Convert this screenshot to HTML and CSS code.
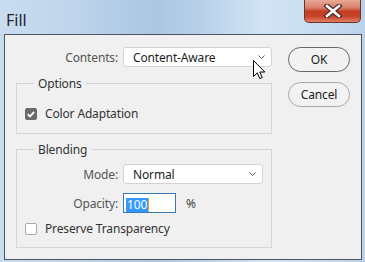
FILE: index.html
```html
<!DOCTYPE html>
<html>
<head>
    <title>Fill</title>
    <link rel="stylesheet" href="styles.css">
</head>
<body>
    <div class="window">
        <div class="titlebar">
            <span class="title">Fill</span>
            <div class="close">
                <svg width="22" height="14" viewBox="0 0 22 14">
                    <path d="M5 2 L17 12 M17 2 L5 12" stroke="#4a2a24" stroke-width="5" stroke-linecap="square"/>
                    <path d="M5 2 L17 12 M17 2 L5 12" stroke="#ffffff" stroke-width="2.6" stroke-linecap="square"/>
                </svg>
            </div>
        </div>

        <div class="client">
            <div class="main">
                <div class="row top-row">
                    <span class="label wide-label">Contents:</span>
                    <div class="select contents-select">
                        <span>Content-Aware</span>
                        <svg class="chevron" width="7" height="4" viewBox="0 0 7 4"><path d="M0.5 0.5 L3.5 3.5 L6.5 0.5" fill="none" stroke="#555" stroke-width="1"/></svg>
                    </div>
                </div>

                <fieldset class="group options">
                    <legend>Options</legend>
                    <div class="check-row">
                        <span class="checkbox checked">
                            <svg width="12" height="12" viewBox="0 0 12 12"><path d="M2.8 6.2 L5 8.4 L9.2 3.8" fill="none" stroke="#fff" stroke-width="1.8"/></svg>
                        </span>
                        <span class="check-text">Color Adaptation</span>
                    </div>
                </fieldset>

                <fieldset class="group blending">
                    <legend>Blending</legend>
                    <div class="row">
                        <span class="label">Mode:</span>
                        <div class="select mode-select">
                            <span>Normal</span>
                            <svg class="chevron" width="7" height="4" viewBox="0 0 7 4"><path d="M0.5 0.5 L3.5 3.5 L6.5 0.5" fill="none" stroke="#555" stroke-width="1"/></svg>
                        </div>
                    </div>
                    <div class="row opacity-row">
                        <span class="label">Opacity:</span>
                        <div class="text-input"><span class="selected">100</span></div>
                        <span class="unit">%</span>
                    </div>
                    <div class="check-row preserve">
                        <span class="checkbox"></span>
                        <span class="check-text">Preserve Transparency</span>
                    </div>
                </fieldset>
            </div>

            <div class="buttons">
                <div class="btn default">OK</div>
                <div class="btn">Cancel</div>
            </div>
        </div>

        <svg class="cursor" width="13" height="20" viewBox="0 0 13 20">
            <path d="M0.5 0.5 L0.5 16.5 L4.3 12.8 L6.8 18.6 L9.2 17.6 L6.8 12 L11.8 12 Z" fill="#fff" stroke="#000" stroke-width="1" stroke-linejoin="miter"/>
        </svg>
    </div>
</body>
</html>
```

FILE: styles.css
```css
html, body {
    margin: 0;
    padding: 0;
    overflow: hidden;
}
body {
    font-family: "Noto Sans", "Open Sans", sans-serif;
    font-size: 12px;
    letter-spacing: -0.15px;
    color: #2b2b2b;
}
.window {
    position: relative;
    width: 365px;
    height: 262px;
    box-sizing: border-box;
    padding: 0 3px 2px 4px;
    background: linear-gradient(to right, #cadcf0 0%, #bfd5ec 20%, #aac7e3 42%, #b8d1ea 55%, #d2e3f4 72%, #c8dcf1 88%, #bad2ec 100%);
}
.titlebar {
    height: 34px;
    display: flex;
    justify-content: space-between;
    align-items: flex-start;
}
.title {
    padding: 9px 0 0 2px;
    font-size: 16px;
    letter-spacing: 0;
    color: #1c2530;
}
.close {
    width: 57px;
    height: 23px;
    margin-right: 1px;
    box-sizing: border-box;
    border: 1px solid #6a3328;
    border-top: none;
    border-radius: 0 0 5px 5px;
    background: linear-gradient(to bottom, #e9a896 0%, #d9806a 35%, #c43b22 52%, #c9452b 75%, #e0806a 100%);
    display: flex;
    align-items: center;
    justify-content: center;
}
.client {
    height: 226px;
    box-sizing: border-box;
    border: 1px solid #4e5560;
    background: #f0f0f0;
    display: flex;
    padding: 12px 0 0 11px;
}
.main {
    width: 256px;
}
.row {
    display: flex;
    align-items: center;
    height: 20px;
}
.label {
    width: 93px;
    margin-right: 5px;
    text-align: right;
    color: #555;
}
.wide-label {
    width: 102px;
}
.select {
    height: 20px;
    box-sizing: border-box;
    border: 1px solid #d3d3d3;
    border-radius: 3px;
    background: #fff;
    display: flex;
    align-items: center;
    justify-content: space-between;
    padding: 0 6px 0 9px;
    color: #1e1e1e;
}
.contents-select {
    width: 149px;
}
.mode-select {
    width: 140px;
}
.chevron {
    display: block;
}
.group {
    margin: 0;
    min-width: 0;
    border: 1px solid #d6d6d6;
    padding: 0 8px;
}
.group legend {
    margin-left: 9px;
    padding: 0 4px;
    line-height: 17px;
    color: #333;
}
.options {
    margin-top: 8px;
    padding-top: 13px;
    padding-bottom: 11px;
}
.blending {
    margin-top: 7px;
    padding-top: 6px;
    padding-bottom: 10px;
}
.opacity-row {
    margin-top: 9px;
}
.preserve {
    margin-top: 7px;
}
.check-row {
    display: flex;
    align-items: center;
    height: 17px;
}
.checkbox {
    width: 12px;
    height: 12px;
    box-sizing: border-box;
    border: 1px solid #a8a8a8;
    border-radius: 2px;
    background: #fff;
    margin-right: 8px;
    display: flex;
}
.checkbox svg {
    margin: -1px;
}
.checkbox.checked {
    background: #6a6a6a;
    border-color: #6a6a6a;
}
.check-text {
    color: #333;
}
.text-input {
    width: 53px;
    height: 20px;
    box-sizing: border-box;
    border: 1px solid #3a78ad;
    background: #fff;
    padding: 2px 0 0 2px;
}
.selected {
    display: inline-block;
    height: 14px;
    line-height: 14px;
    padding: 0 1px;
    background: #3399ff;
    color: #fff;
    border-right: 1px solid #d8a040;
}
.unit {
    margin-left: 10px;
    color: #444;
}
.buttons {
    margin-left: 16px;
    display: flex;
    flex-direction: column;
    gap: 10px;
}
.btn {
    width: 62px;
    height: 25px;
    box-sizing: border-box;
    border: 1px solid #aaa;
    border-radius: 13px;
    display: flex;
    align-items: center;
    justify-content: center;
    color: #222;
    background: #f2f2f2;
}
.btn.default {
    border-color: #666;
}
.cursor {
    position: absolute;
    left: 253px;
    top: 60px;
}
```
